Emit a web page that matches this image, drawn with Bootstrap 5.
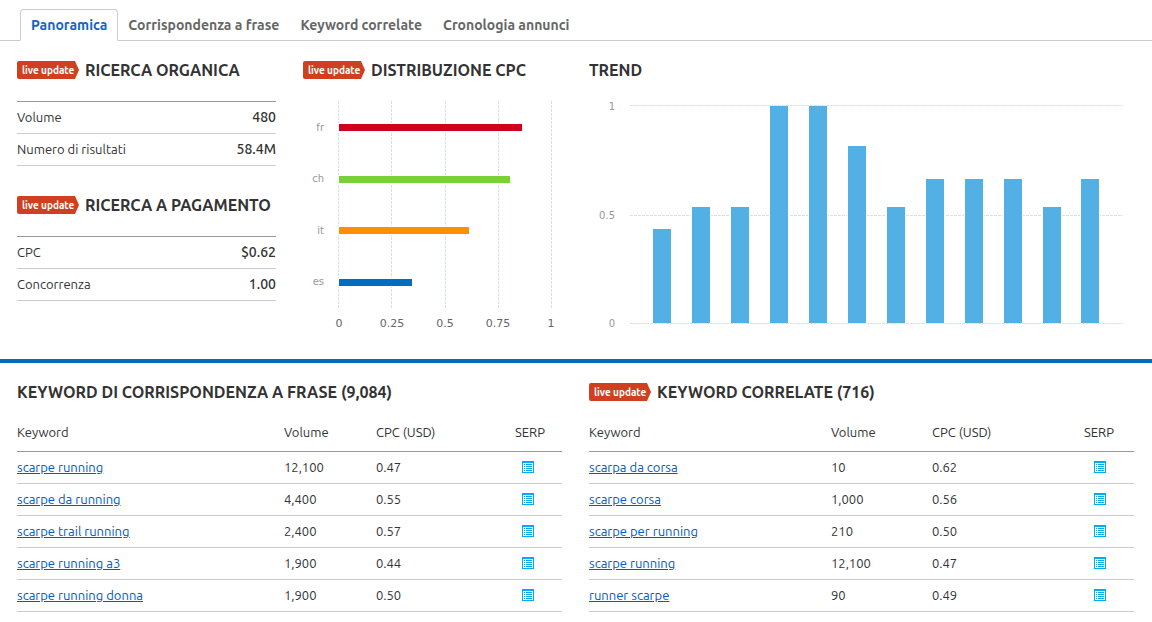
<!DOCTYPE html>
<html lang="it">
<head>
<meta charset="utf-8">
<meta name="viewport" content="width=device-width, initial-scale=1">
<title>Panoramica keyword</title>
<link href="https://cdn.jsdelivr.net/npm/bootstrap@5.3.0/dist/css/bootstrap.min.css" rel="stylesheet">
<style>
  body { font-family: Ubuntu, Roboto, "Noto Sans", sans-serif; font-size: 13px; color: #333; background: #fff; }

  /* tabs */
  .nav-tabs { --bs-nav-tabs-border-color: #ccc; --bs-nav-tabs-border-radius: 4px; padding: 9px 20px 0; }
  .nav-tabs .nav-item + .nav-item { margin-left: -1px; }
  .nav-tabs .nav-link { padding: 5px 10px; font: 700 14px/20px Ubuntu, "Noto Sans", sans-serif; color: #666; }
  .nav-tabs .nav-link.active { color: #1565c0; border-color: #ccc #ccc #fff; }

  .pane { padding: 20px 18px 0 17px; }
  .halves { display: grid; grid-template-columns: repeat(2, minmax(0, 1fr)); gap: 27px; }
  .upper { min-height: 318px; }
  .stack { display: grid; gap: 30px; align-content: start; }

  .heading-line { gap: 6px; }
  .title { font: 700 16px/18px Ubuntu, "Noto Sans", sans-serif; color: #333; margin: 0; white-space: nowrap; }
  .live { width: 62px; height: 18px; padding-left: 5px; font: 700 10px/20px Ubuntu, "Noto Sans", sans-serif; color: #fff; background: #d03f20; border-radius: 2px 0 0 2px; clip-path: polygon(0 0, 58px 0, 100% 50%, 58px 100%, 0 100%); white-space: nowrap; }

  /* tables */
  .lined { --bs-table-bg: transparent; margin: 0; color: #333; }
  .lined > :not(caption) > * > * { padding: 0; line-height: 31px; color: #333; border-bottom: 1px solid #ccc; font-weight: 400; white-space: nowrap; }
  .totals { border-top: 1px solid #999; margin-top: 22px; }
  .totals > tbody > tr > td { font-size: 14px; font-weight: 500; text-align: right; }
  .keys { table-layout: fixed; margin-top: 13px; }
  .keys > thead > tr > th { line-height: 37px; border-color: #999; }
  .keys a { color: #0059c9; text-decoration: underline; }
  .phrase .vol { width: 92px; } .phrase .cpc { width: 139px; } .phrase .serp { width: 47px; }
  .related .vol { width: 101px; } .related .cpc { width: 152px; } .related .serp { width: 50px; }
  .phrase tbody td:last-child { padding-left: 7px; }
  .related tbody td:last-child { padding-left: 10px; }
  .serp-btn { width: 12px; height: 12px; margin: 9px 0 10px; padding: 0; border: 0; background: none; display: block; }
  .serp-btn svg { display: block; }

  /* charts */
  .ticks { font: 10px/12px "DejaVu Sans", sans-serif; color: #999; }
  .cpc-chart { margin: 22px 10px 0 0; }
  .cpc-chart .names { width: 35px; padding: 1px 14px 0 0; text-align: right; }
  .cpc-plot {
    --dash: linear-gradient(#d5e2e3 3px, transparent 3px);
    height: 207px; padding: 1px 1px 0;
    background-image: var(--dash), var(--dash), var(--dash), var(--dash), var(--dash);
    background-size: 1px 4px; background-repeat: repeat-y;
    background-position: 0 0, 25% 0, 50% 0, 75% 0, 100% 0;
  }
  .cpc-bar { height: 7px; box-shadow: 0 0 0 1px #fff; }
  .scale { margin: 10px 11px 0 36px; font-size: 11px; color: #666; }
  .scale span { width: 0; display: flex; justify-content: center; }
  .trend-chart { margin: 26px 11px 0 0; }
  .trend-chart .names { width: 41px; padding-right: 15px; text-align: right; margin: -4px 0 -6px; }
  .trend-plot {
    --dash: linear-gradient(90deg, #d5e2e3 3px, transparent 3px);
    height: 219px; padding: 1px 13px;
    background-image: var(--dash), var(--dash), var(--dash);
    background-size: 4px 1px; background-repeat: repeat-x;
    background-position: 0 0, 0 calc(50% + 1px), 0 100%;
  }
  .trend-bar { width: 18px; background: #53b0e4; box-shadow: -1px 0 #fff, 1px 0 #fff; }
  .divider { height: 4px; background: #006dc0; }
</style>
</head>
<body>
<svg class="d-none" aria-hidden="true">
  <symbol id="list" viewBox="0 0 12 12">
    <path fill="#00adef" fill-rule="evenodd" d="M0 0h12v12H0zM1 2v9h10V2z"/>
    <path fill="#00adef" d="M2 3h1v1H2zM4 3h6v1H4zM2 5h1v1H2zM4 5h6v1H4zM2 7h1v1H2zM4 7h6v1H4zM2 9h1v1H2zM4 9h6v1H4z"/>
  </symbol>
</svg>

<nav>
  <ul class="nav nav-tabs">
    <li class="nav-item"><a class="nav-link active" aria-current="page" href="#">Panoramica</a></li>
    <li class="nav-item"><a class="nav-link" href="#">Corrispondenza a frase</a></li>
    <li class="nav-item"><a class="nav-link" href="#">Keyword correlate</a></li>
    <li class="nav-item"><a class="nav-link" href="#">Cronologia annunci</a></li>
  </ul>
</nav>

<main>
  <div class="pane halves upper">
    <div class="halves">
      <div class="stack">
        <section>
          <div class="d-flex heading-line"><span class="live">live update</span><h2 class="title">RICERCA ORGANICA</h2></div>
          <table class="table lined totals">
            <tbody>
              <tr><th scope="row">Volume</th><td>480</td></tr>
              <tr><th scope="row">Numero di risultati</th><td>58.4M</td></tr>
            </tbody>
          </table>
        </section>
        <section>
          <div class="d-flex heading-line"><span class="live">live update</span><h2 class="title">RICERCA A PAGAMENTO</h2></div>
          <table class="table lined totals">
            <tbody>
              <tr><th scope="row">CPC</th><td>$0.62</td></tr>
              <tr><th scope="row">Concorrenza</th><td>1.00</td></tr>
            </tbody>
          </table>
        </section>
      </div>
      <section>
        <div class="d-flex heading-line"><span class="live">live update</span><h2 class="title">DISTRIBUZIONE CPC</h2></div>
        <div class="cpc-chart ticks d-flex">
          <div class="names d-flex flex-column justify-content-around"><span>fr</span><span>ch</span><span>it</span><span>es</span></div>
          <div class="cpc-plot flex-grow-1 d-flex flex-column justify-content-around">
            <div class="cpc-bar" style="width:86.5%;background:#d0021b"></div>
            <div class="cpc-bar" style="width:80.7%;background:#78d237"></div>
            <div class="cpc-bar" style="width:61.5%;background:#ff8f00"></div>
            <div class="cpc-bar" style="width:34.5%;background:#006dc0"></div>
          </div>
        </div>
        <div class="scale ticks d-flex justify-content-between"><span>0</span><span>0.25</span><span>0.5</span><span>0.75</span><span>1</span></div>
      </section>
    </div>
    <section>
      <h2 class="title">TREND</h2>
      <div class="trend-chart ticks d-flex">
        <div class="names d-flex flex-column justify-content-between"><span>1</span><span>0.5</span><span>0</span></div>
        <div class="trend-plot flex-grow-1 d-flex align-items-end justify-content-around">
          <div class="trend-bar" style="height:43.5%"></div>
          <div class="trend-bar" style="height:53.5%"></div>
          <div class="trend-bar" style="height:53.5%"></div>
          <div class="trend-bar" style="height:100%"></div>
          <div class="trend-bar" style="height:100%"></div>
          <div class="trend-bar" style="height:81.5%"></div>
          <div class="trend-bar" style="height:53.5%"></div>
          <div class="trend-bar" style="height:66.5%"></div>
          <div class="trend-bar" style="height:66.5%"></div>
          <div class="trend-bar" style="height:66.5%"></div>
          <div class="trend-bar" style="height:53.5%"></div>
          <div class="trend-bar" style="height:66.5%"></div>
        </div>
      </div>
    </section>
  </div>

  <div class="divider"></div>

  <div class="pane halves">
    <section>
      <h2 class="title">KEYWORD DI CORRISPONDENZA A FRASE (9,084)</h2>
      <table class="table lined keys phrase">
        <thead><tr><th scope="col">Keyword</th><th scope="col" class="vol">Volume</th><th scope="col" class="cpc">CPC (USD)</th><th scope="col" class="serp">SERP</th></tr></thead>
        <tbody>
          <tr><td><a href="#">scarpe running</a></td><td>12,100</td><td>0.47</td><td><button class="serp-btn" type="button" aria-label="SERP"><svg width="12" height="12"><use href="#list"/></svg></button></td></tr>
          <tr><td><a href="#">scarpe da running</a></td><td>4,400</td><td>0.55</td><td><button class="serp-btn" type="button" aria-label="SERP"><svg width="12" height="12"><use href="#list"/></svg></button></td></tr>
          <tr><td><a href="#">scarpe trail running</a></td><td>2,400</td><td>0.57</td><td><button class="serp-btn" type="button" aria-label="SERP"><svg width="12" height="12"><use href="#list"/></svg></button></td></tr>
          <tr><td><a href="#">scarpe running a3</a></td><td>1,900</td><td>0.44</td><td><button class="serp-btn" type="button" aria-label="SERP"><svg width="12" height="12"><use href="#list"/></svg></button></td></tr>
          <tr><td><a href="#">scarpe running donna</a></td><td>1,900</td><td>0.50</td><td><button class="serp-btn" type="button" aria-label="SERP"><svg width="12" height="12"><use href="#list"/></svg></button></td></tr>
        </tbody>
      </table>
    </section>
    <section>
      <div class="d-flex heading-line"><span class="live">live update</span><h2 class="title">KEYWORD CORRELATE (716)</h2></div>
      <table class="table lined keys related">
        <thead><tr><th scope="col">Keyword</th><th scope="col" class="vol">Volume</th><th scope="col" class="cpc">CPC (USD)</th><th scope="col" class="serp">SERP</th></tr></thead>
        <tbody>
          <tr><td><a href="#">scarpa da corsa</a></td><td>10</td><td>0.62</td><td><button class="serp-btn" type="button" aria-label="SERP"><svg width="12" height="12"><use href="#list"/></svg></button></td></tr>
          <tr><td><a href="#">scarpe corsa</a></td><td>1,000</td><td>0.56</td><td><button class="serp-btn" type="button" aria-label="SERP"><svg width="12" height="12"><use href="#list"/></svg></button></td></tr>
          <tr><td><a href="#">scarpe per running</a></td><td>210</td><td>0.50</td><td><button class="serp-btn" type="button" aria-label="SERP"><svg width="12" height="12"><use href="#list"/></svg></button></td></tr>
          <tr><td><a href="#">scarpe running</a></td><td>12,100</td><td>0.47</td><td><button class="serp-btn" type="button" aria-label="SERP"><svg width="12" height="12"><use href="#list"/></svg></button></td></tr>
          <tr><td><a href="#">runner scarpe</a></td><td>90</td><td>0.49</td><td><button class="serp-btn" type="button" aria-label="SERP"><svg width="12" height="12"><use href="#list"/></svg></button></td></tr>
        </tbody>
      </table>
    </section>
  </div>
</main>
<script src="https://cdn.jsdelivr.net/npm/bootstrap@5.3.0/dist/js/bootstrap.bundle.min.js"></script>
</body>
</html>
